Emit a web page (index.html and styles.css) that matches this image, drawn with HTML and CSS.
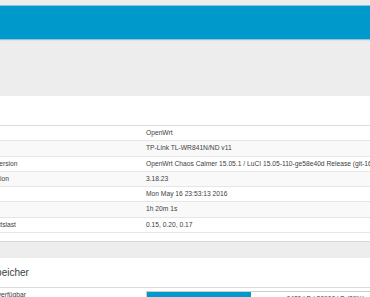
FILE: index.html
```html
<!DOCTYPE html>
<html>
<head>
<meta charset="utf-8">
<link rel="stylesheet" href="styles.css">
</head>
<body>
<div class="topgap"></div>
<header class="header"></header>
<div class="band"></div>
<main class="main">
  <section class="section">
    <h2 class="legend">System</h2>
    <table class="tbl">
      <tr><td class="lbl">Hostname</td><td>OpenWrt</td></tr>
      <tr class="alt"><td class="lbl">Modell</td><td>TP-Link TL-WR841N/ND v11</td></tr>
      <tr><td class="lbl">Firmware-Version</td><td>OpenWrt Chaos Calmer 15.05.1 / LuCI 15.05-110-ge58e40d Release (git-16.018.33482-3201903)</td></tr>
      <tr class="alt"><td class="lbl">Kernel-Version</td><td>3.18.23</td></tr>
      <tr><td class="lbl">Lokale Zeit</td><td>Mon May 16 23:53:13 2016</td></tr>
      <tr class="alt"><td class="lbl">Laufzeit</td><td>1h 20m 1s</td></tr>
      <tr><td class="lbl">Durchschnittslast</td><td>0.15, 0.20, 0.17</td></tr>
    </table>
  </section>
  <div class="gap"></div>
  <div class="divider"></div>
  <section class="section">
    <h2 class="legend">Arbeitsspeicher</h2>
    <table class="tbl">
      <tr class="prow"><td class="lbl">Insgesamt verfügbar</td><td>
        <div class="progress">
          <div class="fill" style="width:29%"></div>
          <div class="ptext">8420 kB / 28908 kB (29%)</div>
        </div>
      </td></tr>
    </table>
  </section>
</main>
</body>
</html>
```
FILE: styles.css
```css
html, body {
  margin: 0;
  padding: 0;
  background: #fff;
  overflow: hidden;
  width: 370px;
  height: 297px;
}
body {
  font-family: "Liberation Sans", Arial, sans-serif;
  color: #404040;
}
.topgap {
  height: 5px;
  background: #ececec;
}
.header {
  height: 33px;
  background: #0099cc;
  border-top: 1px solid #8cc6de;
  border-bottom: 1px solid #8ec3d9;
}
.band {
  height: 55px;
  background: #ededed;
  border-top: 1px solid #e2e2e2;
}
.main {
  margin-left: -39px;
  width: 900px;
}
.legend {
  margin: 0;
  height: 29px;
  padding-left: 0;
  margin-left: -1px;
  font-size: 10px;
  font-weight: normal;
  line-height: 29px;
  color: #404040;
}
.tbl {
  border-collapse: collapse;
  table-layout: fixed;
  width: 900px;
  font-size: 6.7px;
  border-top: 1px solid #dcdcdc;
}
.tbl td {
  padding: 3px 4px;
  line-height: 8.3px;
  height: 8.3px;
  border-bottom: 1px solid #e6e6e6;
  white-space: nowrap;
  overflow: hidden;
}
.tbl td.lbl {
  width: 173px;
}
.tbl tr.alt td {
  background: #f9f9f9;
}
.gap {
  height: 8px;
}
.divider {
  height: 16px;
  background: #ededed;
  border-top: 1px solid #dadada;
}
.prow td {
  padding-top: 3px;
  vertical-align: top;
}
.progress {
  display: grid;
  width: 357px;
  height: 12px;
  border: 1px solid #cccccc;
  background: #fff;
}
.fill {
  grid-area: 1 / 1;
  background: #0099cc;
  height: 100%;
}
.ptext {
  grid-area: 1 / 1;
  text-align: center;
  line-height: 12px;
  padding-top: 1px;
}
```
